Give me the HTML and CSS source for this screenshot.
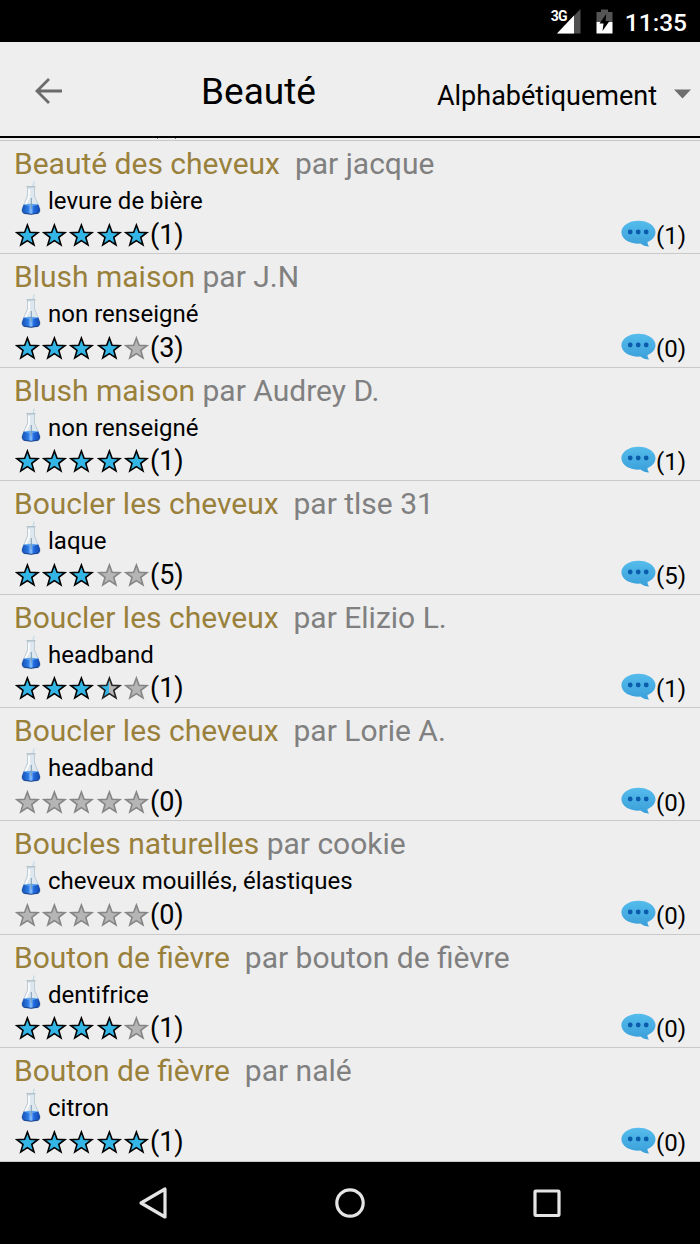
FILE: index.html
```html
<!DOCTYPE html>
<html lang="fr">
<head>
<meta charset="utf-8">
<title>Beauté</title>
<link rel="stylesheet" href="styles.css">
</head>
<body>
<svg class="defs" width="0" height="0" aria-hidden="true">
  <defs>
    <linearGradient id="bubble-fill" x1="0" y1="0" x2="0" y2="1"><stop offset="0" stop-color="#55bcec"/><stop offset="1" stop-color="#3a9fd9"/></linearGradient>
    <linearGradient id="liquid-fill" x1="0" y1="0" x2="1" y2="0"><stop offset="0" stop-color="#1850b0"/><stop offset=".35" stop-color="#2b7be6"/><stop offset=".5" stop-color="#8cc4ff"/><stop offset=".65" stop-color="#1f6ae0"/><stop offset="1" stop-color="#164aa8"/></linearGradient>
    <linearGradient id="half-fill"><stop offset=".5" stop-color="#33b5e5"/><stop offset=".5" stop-color="#b5b5b5"/></linearGradient>
  </defs>
  <symbol id="star" viewBox="0 0 27.2 26"><path stroke-width="1.6" stroke-linejoin="miter" d="M13.4 3 L16.1 10.3 L23.9 10.6 L17.8 15.4 L20 23 L13.4 18.6 L6.8 23 L9 15.4 L2.9 10.6 L10.7 10.3 Z"/></symbol>
  <symbol id="flask" viewBox="0 0 22 36">
    <path d="M12.6 8 L14.2 1.5" stroke="#c5dce5" stroke-width="1.3"/>
    <path d="M7.5 7 H14.5 V16 L20 29 Q21 33.5 16 34 H6 Q1 33.5 2 29 L7.5 16 Z" fill="#dde7ed" stroke="#b4c4ce" stroke-width=".8"/>
    <path d="M6.5 6.6 H15.5" stroke="#b3c3cc" stroke-width="1.2"/>
    <path d="M9 9 V17 L5 25" stroke="#fff" stroke-width="1.5" fill="none"/>
    <path d="M3.6 24.6 Q11 26 18.4 24.6 L20 29 Q20.8 33.5 16 34 H6 Q1.2 33.5 2 29 Z" fill="url(#liquid-fill)"/>
    <path d="M3.6 24.7 Q11 23 18.4 24.7 Q11 27 3.6 24.7" fill="#61a6ee"/>
    <path d="M3.5 33 Q11 35.6 18.5 33" stroke="#1c438c" stroke-width="1" fill="none"/>
    <path d="M11.3 18 V29" stroke="#7d9bb5" stroke-width="1"/>
  </symbol>
  <symbol id="bubble" viewBox="0 0 35 27">
    <path d="M17.4 .8 C27 .8 34.5 5.7 34.5 12.2 C34.5 16.4 31.3 20 26.5 22 Q26.3 24.5 28 26.6 Q23 26.6 19.5 23.6 C9 24.3 .4 19 .4 12.2 C.4 5.7 8 .8 17.4 .8 Z" fill="url(#bubble-fill)"/>
    <circle cx="9.2" cy="12" r="2.4" fill="#0b5cad"/><circle cx="17.2" cy="12" r="2.4" fill="#0b5cad"/><circle cx="25.2" cy="12" r="2.4" fill="#0b5cad"/>
  </symbol>
</svg>

<div class="screen">
  <div class="status">
    <div class="signal">
      <svg width="32" height="30" viewBox="0 0 32 30"><path d="M30.5 4 V28.500 H7 Z" fill="#505050"/><path d="M24 10.500 V28.500 H7 Z" fill="#fff"/></svg>
      <span class="network">3G</span>
    </div>
    <svg class="battery" width="17" height="25" viewBox="0 0 17 25"><path d="M.5 3 H5 V.5 H12 V3 H16.500 V13 H.5 Z" fill="#555"/><path d="M.5 13 H16.500 V24.500 H.5 Z" fill="#fff"/><path d="M10.300 5 L3.500 14.500 H7.500 L6.500 22 L13.500 12 H9.500 Z" fill="#000"/></svg>
    <span class="clock">11:35</span>
  </div>

  <header class="header">
    <svg class="back" width="29" height="28" viewBox="0 0 29 28"><path d="M28 14 H3 M15 2 L3 14 L15 26" fill="none" stroke="#6b6b6b" stroke-width="2.800"/></svg>
    <h1 class="heading">Beauté</h1>
    <div class="sort"><span class="sort-label">Alphabétiquement</span><svg width="17" height="10" viewBox="0 0 17 10"><path d="M0 .5 H17 L8.500 9.500 Z" fill="#6e6e6e"/></svg></div>
  </header>
  <div class="peek"><i></i><i></i></div>

  <main class="list">
    <article class="row">
      <h2 class="title">Beauté des cheveux  <span class="author">par jacque</span></h2>
      <p class="item"><svg class="flask"><use href="#flask"/></svg>levure de bière</p>
      <div class="meta"><svg class="star on"><use href="#star"/></svg><svg class="star on"><use href="#star"/></svg><svg class="star on"><use href="#star"/></svg><svg class="star on"><use href="#star"/></svg><svg class="star on"><use href="#star"/></svg><span class="votes">(1)</span><svg class="bubble"><use href="#bubble"/></svg><span class="comments">(1)</span></div>
    </article>
    <article class="row">
      <h2 class="title">Blush maison <span class="author">par J.N</span></h2>
      <p class="item"><svg class="flask"><use href="#flask"/></svg>non renseigné</p>
      <div class="meta"><svg class="star on"><use href="#star"/></svg><svg class="star on"><use href="#star"/></svg><svg class="star on"><use href="#star"/></svg><svg class="star on"><use href="#star"/></svg><svg class="star off"><use href="#star"/></svg><span class="votes">(3)</span><svg class="bubble"><use href="#bubble"/></svg><span class="comments">(0)</span></div>
    </article>
    <article class="row">
      <h2 class="title">Blush maison <span class="author">par Audrey D.</span></h2>
      <p class="item"><svg class="flask"><use href="#flask"/></svg>non renseigné</p>
      <div class="meta"><svg class="star on"><use href="#star"/></svg><svg class="star on"><use href="#star"/></svg><svg class="star on"><use href="#star"/></svg><svg class="star on"><use href="#star"/></svg><svg class="star on"><use href="#star"/></svg><span class="votes">(1)</span><svg class="bubble"><use href="#bubble"/></svg><span class="comments">(1)</span></div>
    </article>
    <article class="row">
      <h2 class="title">Boucler les cheveux  <span class="author">par tlse 31</span></h2>
      <p class="item"><svg class="flask"><use href="#flask"/></svg>laque</p>
      <div class="meta"><svg class="star on"><use href="#star"/></svg><svg class="star on"><use href="#star"/></svg><svg class="star on"><use href="#star"/></svg><svg class="star off"><use href="#star"/></svg><svg class="star off"><use href="#star"/></svg><span class="votes">(5)</span><svg class="bubble"><use href="#bubble"/></svg><span class="comments">(5)</span></div>
    </article>
    <article class="row">
      <h2 class="title">Boucler les cheveux  <span class="author">par Elizio L.</span></h2>
      <p class="item"><svg class="flask"><use href="#flask"/></svg>headband</p>
      <div class="meta"><svg class="star on"><use href="#star"/></svg><svg class="star on"><use href="#star"/></svg><svg class="star on"><use href="#star"/></svg><svg class="star half"><use href="#star"/></svg><svg class="star off"><use href="#star"/></svg><span class="votes">(1)</span><svg class="bubble"><use href="#bubble"/></svg><span class="comments">(1)</span></div>
    </article>
    <article class="row">
      <h2 class="title">Boucler les cheveux  <span class="author">par Lorie A.</span></h2>
      <p class="item"><svg class="flask"><use href="#flask"/></svg>headband</p>
      <div class="meta"><svg class="star off"><use href="#star"/></svg><svg class="star off"><use href="#star"/></svg><svg class="star off"><use href="#star"/></svg><svg class="star off"><use href="#star"/></svg><svg class="star off"><use href="#star"/></svg><span class="votes">(0)</span><svg class="bubble"><use href="#bubble"/></svg><span class="comments">(0)</span></div>
    </article>
    <article class="row">
      <h2 class="title">Boucles naturelles <span class="author">par cookie</span></h2>
      <p class="item"><svg class="flask"><use href="#flask"/></svg>cheveux mouillés, élastiques</p>
      <div class="meta"><svg class="star off"><use href="#star"/></svg><svg class="star off"><use href="#star"/></svg><svg class="star off"><use href="#star"/></svg><svg class="star off"><use href="#star"/></svg><svg class="star off"><use href="#star"/></svg><span class="votes">(0)</span><svg class="bubble"><use href="#bubble"/></svg><span class="comments">(0)</span></div>
    </article>
    <article class="row">
      <h2 class="title">Bouton de fièvre  <span class="author">par bouton de fièvre</span></h2>
      <p class="item"><svg class="flask"><use href="#flask"/></svg>dentifrice</p>
      <div class="meta"><svg class="star on"><use href="#star"/></svg><svg class="star on"><use href="#star"/></svg><svg class="star on"><use href="#star"/></svg><svg class="star on"><use href="#star"/></svg><svg class="star off"><use href="#star"/></svg><span class="votes">(1)</span><svg class="bubble"><use href="#bubble"/></svg><span class="comments">(0)</span></div>
    </article>
    <article class="row">
      <h2 class="title">Bouton de fièvre  <span class="author">par nalé</span></h2>
      <p class="item"><svg class="flask"><use href="#flask"/></svg>citron</p>
      <div class="meta"><svg class="star on"><use href="#star"/></svg><svg class="star on"><use href="#star"/></svg><svg class="star on"><use href="#star"/></svg><svg class="star on"><use href="#star"/></svg><svg class="star on"><use href="#star"/></svg><span class="votes">(1)</span><svg class="bubble"><use href="#bubble"/></svg><span class="comments">(0)</span></div>
    </article>
  </main>

  <nav class="nav">
    <svg width="34" height="36" viewBox="0 0 34 36"><path d="M29 4 V32 L5 18 Z"/></svg>
    <svg width="34" height="36" viewBox="0 0 34 36"><circle cx="17" cy="18" r="13.200"/></svg>
    <svg width="34" height="36" viewBox="0 0 34 36"><rect x="5" y="6" width="24" height="24.500" rx=".8"/></svg>
  </nav>
</div>
</body>
</html>
```

FILE: styles.css
```css
* { box-sizing: border-box; }
body { margin: 0; background: #000; font-family: Roboto, "Noto Sans", sans-serif; font-weight: 400; }
h1, h2, p { margin: 0; font-weight: 400; }
svg { display: block; flex: none; }
.defs { position: absolute; }
.screen { width: 700px; height: 1244px; display: flex; flex-direction: column; background: #eee; overflow: hidden; }

.status { flex: none; height: 42px; background: #000; color: #fff; display: flex; justify-content: flex-end; padding: 0 13px 0 0; }
.signal { position: relative; padding-top: 5px; margin-right: 14px; }
.network { position: absolute; left: 1px; top: 8px; font-size: 14px; line-height: 16px; font-weight: 700; letter-spacing: -.8px; }
.battery { margin: 9px 12px 0 0; }
.clock { font-size: 24.500px; line-height: 45px; font-weight: 500; }

.header { flex: none; height: 96px; border-bottom: 2px solid #000; display: flex; padding-left: 34px; }
.back { margin: 35px 0 0; }
.heading { flex: 1; padding-left: 138px; font-size: 37px; line-height: 100px; }
.sort { display: flex; align-items: center; padding: 14px 9px 0 0; gap: 17px; font-size: 27px; }
.sort svg { margin-top: -4px; }

.peek { flex: none; height: 3px; border-bottom: 1px solid #c9c9c9; display: flex; gap: 17px; padding-left: 157px; }
.peek i { width: 1px; height: 1px; background: #777; }

.list { flex: none; height: 1021px; }
.row { height: 113.400px; border-bottom: 1px solid #c9c9c9; display: grid; grid-template-rows: 45px 30px 1fr; padding: 0 14px 0 14px; }
.title { font-size: 30px; line-height: 45px; color: #99803b; white-space: pre; }
.author { color: #808080; }
.item { display: flex; padding-left: 6px; gap: 6px; font-size: 24px; line-height: 30px; }
.flask { width: 22px; height: 36px; margin-top: -6px; }
.meta { display: flex; align-items: center; }
.star { width: 27.200px; height: 26px; }
.on { fill: #33b5e5; stroke: #000; }
.off { fill: #b5b5b5; stroke: #858585; }
.half { fill: url(#half-fill); stroke: #222; }
.votes { flex: 1; font-size: 27px; }
.bubble { width: 35px; height: 27px; margin-top: -3px; }
.comments { font-size: 24px; padding-top: 2px; }

.nav { flex: 1; background: #000; display: flex; justify-content: center; gap: 163px; padding-top: 23px; fill: none; stroke: #e5e5e5; stroke-width: 3.200px; stroke-linejoin: round; }
```
